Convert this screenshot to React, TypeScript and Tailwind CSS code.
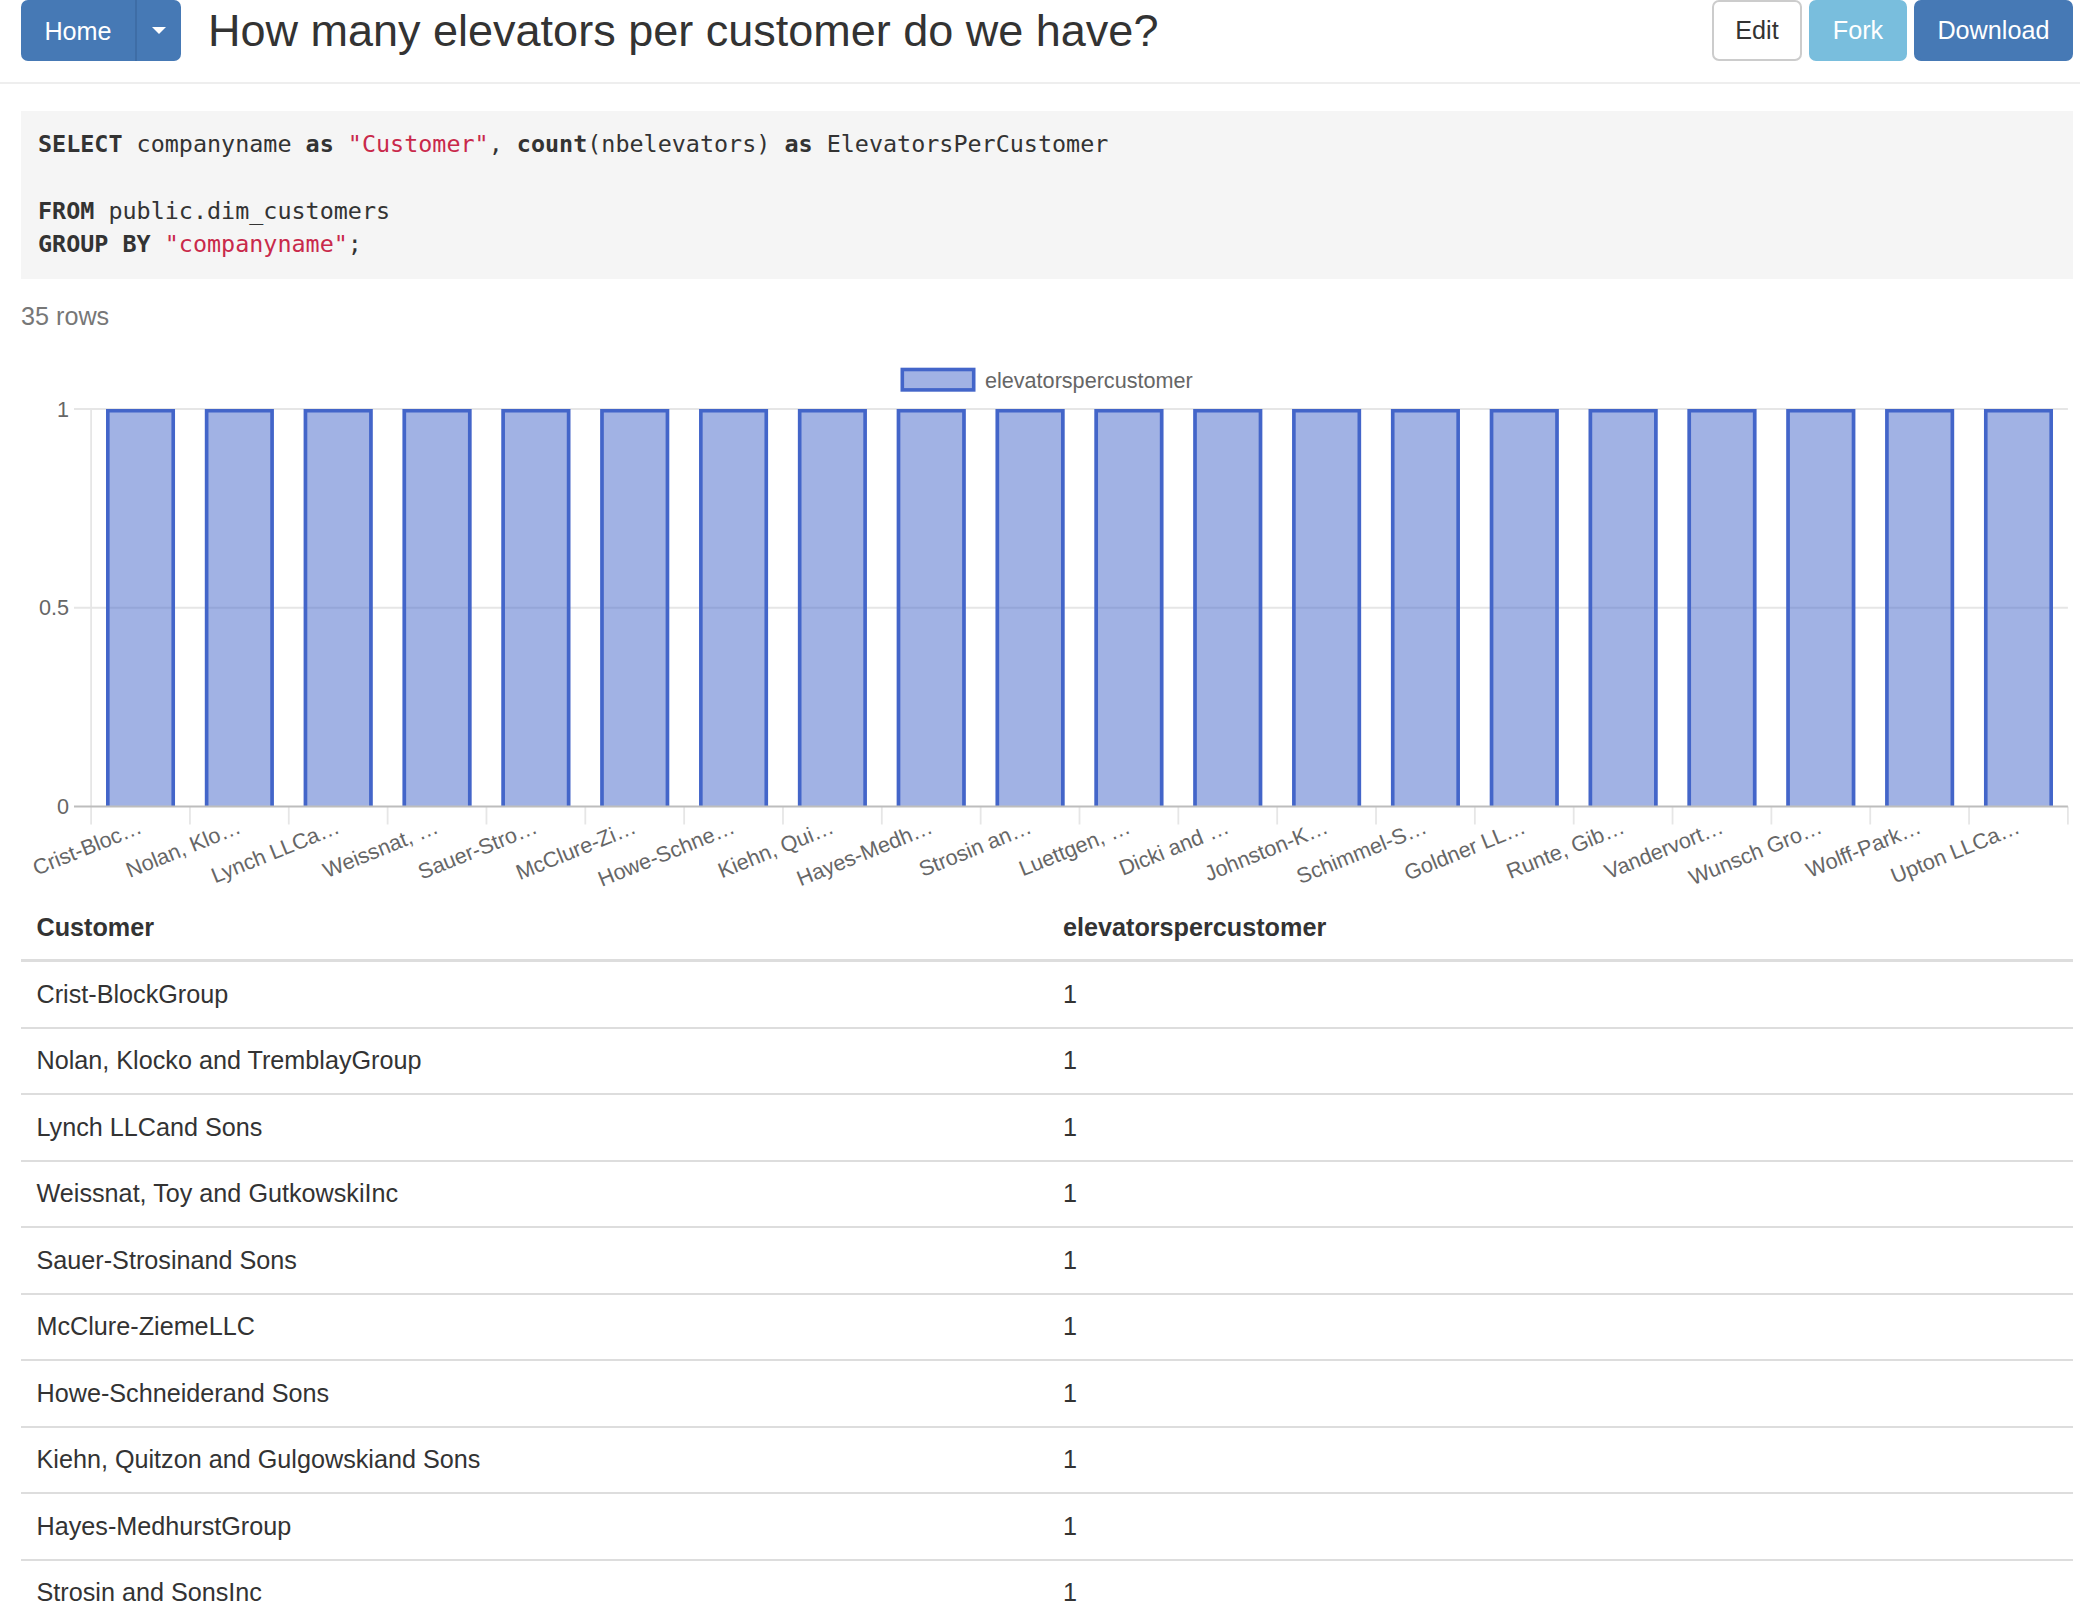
import React from 'react';

const labels = [
  'Crist-Bloc…',
  'Nolan, Klo…',
  'Lynch LLCa…',
  'Weissnat, …',
  'Sauer-Stro…',
  'McClure-Zi…',
  'Howe-Schne…',
  'Kiehn, Qui…',
  'Hayes-Medh…',
  'Strosin an…',
  'Luettgen, …',
  'Dicki and …',
  'Johnston-K…',
  'Schimmel-S…',
  'Goldner LL…',
  'Runte, Gib…',
  'Vandervort…',
  'Wunsch Gro…',
  'Wolff-Park…',
  'Upton LLCa…',
];

const rows = [
  'Crist-BlockGroup',
  'Nolan, Klocko and TremblayGroup',
  'Lynch LLCand Sons',
  'Weissnat, Toy and GutkowskiInc',
  'Sauer-Strosinand Sons',
  'McClure-ZiemeLLC',
  'Howe-Schneiderand Sons',
  'Kiehn, Quitzon and Gulgowskiand Sons',
  'Hayes-MedhurstGroup',
  'Strosin and SonsInc',
  'Luettgen, Kuhn and BeierLLC',
  'Dicki and SonsGroup',
];

// plot geometry, in svg units (svg starts at page x=21)
const X0 = 70.1;
const PITCH = 98.84;
const BAR_W = 69;
const TOP = 75;
const ZERO = 472.5;
const MID = (TOP + ZERO) / 2;
const X_END = X0 + PITCH * 20;
const BORDER = 3.6;

function Chart() {
  return (
    <svg width={2052} height={563} viewBox="0 0 2052 563" className="block">
      {/* legend */}
      <rect x={879.5 + BORDER / 2} y={33.7 + BORDER / 2} width={75 - BORDER} height={24 - BORDER} fill="rgba(67,101,201,0.5)" stroke="#4365c9" strokeWidth={BORDER} />
      <text x={964} y={46} dy="0.35em" fontSize={21.6} fill="#666" fontFamily="Liberation Sans, Arial, sans-serif">
        elevatorspercustomer
      </text>

      {/* grid */}
      <line x1={53} x2={X_END} y1={TOP} y2={TOP} stroke="#e6e6e6" strokeWidth={1.8} />
      <line x1={53} x2={X_END} y1={MID} y2={MID} stroke="#e6e6e6" strokeWidth={1.8} />
      <line x1={X0} x2={X0} y1={TOP} y2={ZERO + 18} stroke="#e6e6e6" strokeWidth={1.8} />
      {Array.from({ length: 20 }, (_, i) => (
        <line key={i} x1={X0 + (i + 1) * PITCH} x2={X0 + (i + 1) * PITCH} y1={ZERO} y2={ZERO + 18} stroke="#e6e6e6" strokeWidth={1.8} />
      ))}

      {/* y labels */}
      {[
        ['1', TOP],
        ['0.5', MID],
        ['0', ZERO],
      ].map(([t, y]) => (
        <text key={t as string} x={48} y={y as number} dy="0.35em" textAnchor="end" fontSize={21.6} fill="#666" fontFamily="Liberation Sans, Arial, sans-serif">
          {t}
        </text>
      ))}

      {/* bars */}
      {labels.map((_, i) => {
        const x = X0 + i * PITCH + (PITCH - BAR_W) / 2;
        return (
          <g key={i}>
            <rect x={x} y={TOP} width={BAR_W} height={ZERO - TOP} fill="rgba(67,101,201,0.5)" />
            <path
              d={`M${x + BORDER / 2} ${ZERO} V${TOP + BORDER / 2} H${x + BAR_W - BORDER / 2} V${ZERO}`}
              fill="none"
              stroke="#4365c9"
              strokeWidth={BORDER}
            />
          </g>
        );
      })}

      <line x1={53} x2={X_END} y1={ZERO} y2={ZERO} stroke="#bdbdbd" strokeWidth={1.8} />

      {/* x labels */}
      {labels.map((l, i) => {
        const cx = X0 + i * PITCH + PITCH / 2;
        return (
          <text
            key={l}
            transform={`translate(${cx} ${ZERO + 19}) rotate(-22)`}
            dy="0.35em"
            textAnchor="end"
            fontSize={21.6}
            fill="#666"
            fontFamily="Liberation Sans, Arial, sans-serif"
          >
            {l}
          </text>
        );
      })}
    </svg>
  );
}

export default function App() {
  return (
    <div className="min-h-screen bg-white text-[#333] font-['Liberation_Sans',Arial,sans-serif] text-[25.2px]">
      <header className="flex h-[84px] items-start justify-between border-b-2 border-[#eee] pl-[21px] pr-[7px]">
        <div className="flex items-center">
          <div className="flex h-[61px] overflow-hidden rounded-[7px] bg-[#4679b5] text-white">
            <span className="flex items-center px-[23.4px] leading-[36px]">Home</span>
            <span className="flex w-[46px] items-center justify-center border-l-2 border-[#3e6da6]">
              <span className="h-0 w-0 border-l-[7px] border-r-[7px] border-t-[7px] border-l-transparent border-r-transparent border-t-white" />
            </span>
          </div>
          <h1 className="ml-[27px] text-[45px] font-normal leading-[61px] text-[#333]">
            How many elevators per customer do we have?
          </h1>
        </div>
        <div className="flex gap-[7px]">
          <button className="h-[61px] rounded-[7px] border-2 border-[#ccc] bg-white px-[21.6px] text-[#333]">Edit</button>
          <button className="h-[61px] rounded-[7px] border-2 border-[#79bedd] bg-[#79bedd] px-[21.6px] text-white">Fork</button>
          <button className="h-[61px] rounded-[7px] border-2 border-[#4679b5] bg-[#4679b5] px-[21.6px] text-white">Download</button>
        </div>
      </header>

      <main className="pl-[21px] pr-[7px]">
        <pre className="mt-[27px] whitespace-pre bg-[#f5f5f5] px-[17px] pb-[17.2px] pt-[16.8px] font-['DejaVu_Sans_Mono',monospace] text-[23.4px] leading-[33.5px] text-[#333]">
          <b>SELECT</b> companyname <b>as</b> <span className="text-[#c9294b]">"Customer"</span>, <b>count</b>(nbelevators) <b>as</b> ElevatorsPerCustomer
          {'\n\n'}
          <b>FROM</b> public.dim_customers
          {'\n'}
          <b>GROUP BY</b> <span className="text-[#c9294b]">"companyname"</span>;
        </pre>

        <p className="mt-[19.5px] leading-[36px] text-[#777]">35 rows</p>

        <Chart />

        <div className="grid grid-cols-[1027px_1fr]">
          <div className="flex h-[64.8px] items-center border-b-[3px] border-[#ddd] px-[15.5px] font-bold">Customer</div>
          <div className="flex h-[64.8px] items-center border-b-[3px] border-[#ddd] px-[15px] font-bold">elevatorspercustomer</div>
          {rows.map((r) => (
            <React.Fragment key={r}>
              <div className="flex h-[66.5px] items-center border-b-2 border-[#ddd] px-[15.5px]">{r}</div>
              <div className="flex h-[66.5px] items-center border-b-2 border-[#ddd] px-[15px]">1</div>
            </React.Fragment>
          ))}
        </div>
      </main>
    </div>
  );
}
